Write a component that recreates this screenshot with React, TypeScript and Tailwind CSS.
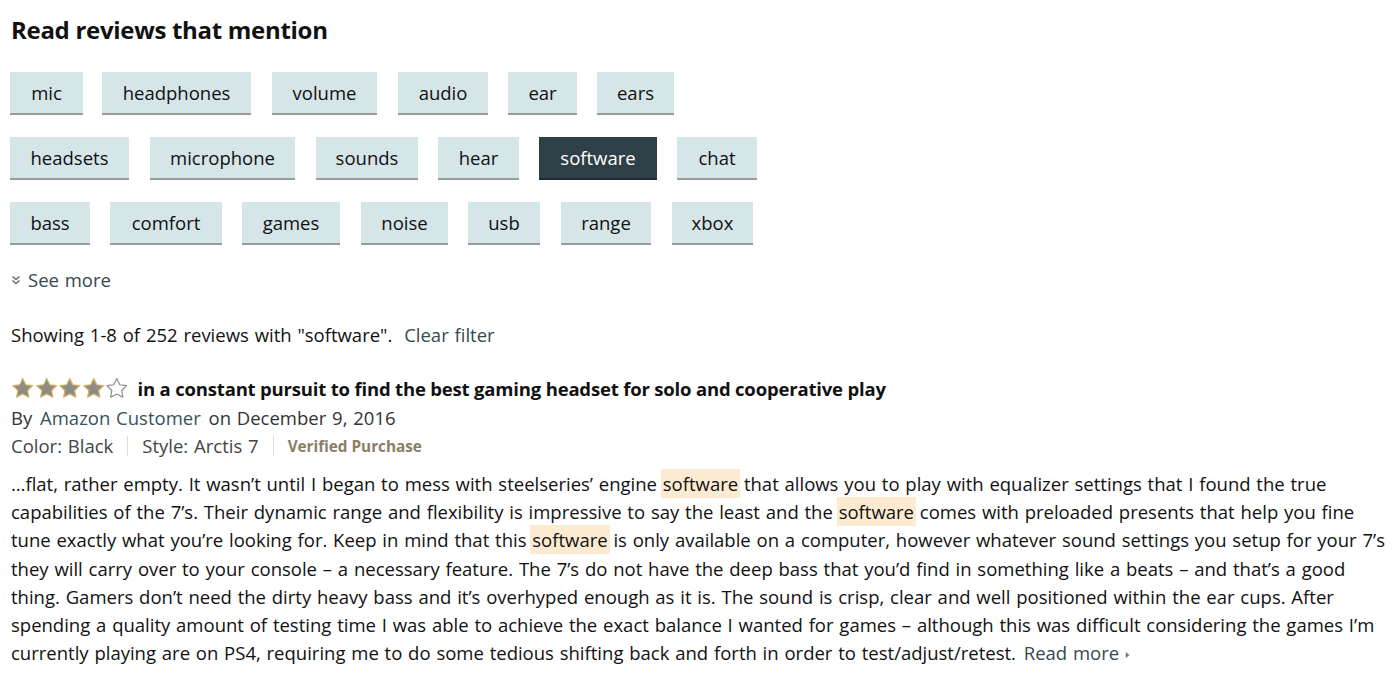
import React from "react";

type Tag = { label: string; w: string; ml: string; active?: boolean };

const rows: Tag[][] = [
  [
    { label: "mic", w: "w-[73px]", ml: "ml-0" },
    { label: "headphones", w: "w-[149px]", ml: "ml-[19px]" },
    { label: "volume", w: "w-[105px]", ml: "ml-[21px]" },
    { label: "audio", w: "w-[90px]", ml: "ml-[21px]" },
    { label: "ear", w: "w-[69px]", ml: "ml-[20px]" },
    { label: "ears", w: "w-[77px]", ml: "ml-[20px]" },
  ],
  [
    { label: "headsets", w: "w-[119px]", ml: "ml-0" },
    { label: "microphone", w: "w-[145px]", ml: "ml-[21px]" },
    { label: "sounds", w: "w-[102px]", ml: "ml-[21px]" },
    { label: "hear", w: "w-[81px]", ml: "ml-[20px]" },
    { label: "software", w: "w-[118px]", ml: "ml-[20px]", active: true },
    { label: "chat", w: "w-[80px]", ml: "ml-[20px]" },
  ],
  [
    { label: "bass", w: "w-[80px]", ml: "ml-0" },
    { label: "comfort", w: "w-[112px]", ml: "ml-[20px]" },
    { label: "games", w: "w-[98px]", ml: "ml-[20px]" },
    { label: "noise", w: "w-[87px]", ml: "ml-[21px]" },
    { label: "usb", w: "w-[72px]", ml: "ml-[20px]" },
    { label: "range", w: "w-[90px]", ml: "ml-[21px]" },
    { label: "xbox", w: "w-[81px]", ml: "ml-[21px]" },
  ],
];

const STAR =
  "M12 1.6l3.1 6.3 6.95.97-5.03 4.88 1.2 6.9L12 17.4 5.78 20.65l1.2-6.9L1.95 8.87l6.95-.97L12 1.6z";

function Star({ filled }: { filled: boolean }) {
  return (
    <svg viewBox="0 0 24 24" className="w-[23.5px] h-[23.5px] shrink-0">
      <path
        d={STAR}
        fill={filled ? "#8f8c84" : "#ffffff"}
        stroke={filled ? "#d8b46a" : "#8f8c84"}
        strokeWidth={1.2}
        strokeLinejoin="round"
      />
    </svg>
  );
}

function Hl({ children }: { children: React.ReactNode }) {
  return <span className="bg-[#fcebd1] px-[2px] -mx-[2px] py-[2px]">{children}</span>;
}

export default function App() {
  return (
    <div className="w-[1400px] h-[680px] overflow-hidden bg-white px-[11px] pt-[14px] font-['Open_Sans','Liberation_Sans',sans-serif] text-[#111] [word-spacing:1px]">
      <h2 className="text-[24px] font-bold leading-[32px] tracking-[-0.3px] [word-spacing:0px]">Read reviews that mention</h2>

      <div className="mt-[26px] -ml-px flex flex-col gap-[22px]">
        {rows.map((row, i) => (
          <div key={i} className="flex">
            {row.map((t) => (
              <div
                key={t.label}
                className={
                  t.active
                    ? `${t.w} ${t.ml} h-[43px] flex items-center justify-center bg-[#2e3f48] border-b-2 border-[#1e2a30] text-white text-[18.5px]`
                    : `${t.w} ${t.ml} h-[43px] flex items-center justify-center bg-[#d5e5e8] border-b-2 border-[#9a9c9c] text-[#111] text-[18.5px]`
                }
              >
                {t.label}
              </div>
            ))}
          </div>
        ))}
      </div>

      <div className="mt-[21px] flex items-center h-[28px] text-[18.5px] text-[#37474f]">
        <svg viewBox="0 0 10 10" className="w-[10px] h-[10px] mr-[7px]">
          <path d="M1.5 1.5L5 4.5L8.5 1.5M1.5 5.5L5 8.5L8.5 5.5" fill="none" stroke="#555" strokeWidth={1.1} />
        </svg>
        See more
      </div>

      <div className="mt-[27px] h-[28px] leading-[28px] text-[18.5px]">
        Showing 1-8 of 252 reviews with "software".{" "}
        <span className="text-[#37474f] ml-[6px]">Clear filter</span>
      </div>

      <div className="mt-[26px] flex items-center h-[28px]">
        <div className="flex">
          {[1, 2, 3, 4, 5].map((n) => (
            <Star key={n} filled={n <= 4} />
          ))}
        </div>
        <span className="ml-[9px] text-[18.5px] font-bold tracking-[-0.18px] [word-spacing:0px]">
          in a constant pursuit to find the best gaming headset for solo and cooperative play
        </span>
      </div>

      <div className="mt-px h-[28px] leading-[28px] text-[18.5px] text-[#333]">
        By <span className="text-[#37525c] ml-[2px] mr-[2px]">Amazon Customer</span> on December 9, 2016
      </div>

      <div className="h-[28px] flex items-center text-[18.5px] text-[#444]">
        <span>Color: Black</span>
        <span className="mx-[14px] w-px h-[20px] bg-[#ddd]" />
        <span>Style: Arctis 7</span>
        <span className="mx-[14px] w-px h-[20px] bg-[#ddd]" />
        <span className="text-[15.3px] font-bold text-[#8b7e66] [word-spacing:0px]">Verified Purchase</span>
      </div>

      <p className="mt-[10px] text-[18.5px] leading-[28.2px] whitespace-nowrap">
        …flat, rather empty. It wasn’t until I began to mess with steelseries’ engine <Hl>software</Hl> that allows you to play with equalizer settings that I found the true
        <br />
        capabilities of the 7’s. Their dynamic range and flexibility is impressive to say the least and the <Hl>software</Hl> comes with preloaded presents that help you fine
        <br />
        tune exactly what you’re looking for. Keep in mind that this <Hl>software</Hl> is only available on a computer, however whatever sound settings you setup for your 7’s
        <br />
        they will carry over to your console – a necessary feature. The 7’s do not have the deep bass that you’d find in something like a beats – and that’s a good
        <br />
        thing. Gamers don’t need the dirty heavy bass and it’s overhyped enough as it is. The sound is crisp, clear and well positioned within the ear cups. After
        <br />
        spending a quality amount of testing time I was able to achieve the exact balance I wanted for games – although this was difficult considering the games I’m
        <br />
        currently playing are on PS4, requiring me to do some tedious shifting back and forth in order to test/adjust/retest.{" "}
        <span className="text-[#37474f] ml-[2px]">Read more</span>
        <svg viewBox="0 0 8 10" className="inline-block w-[6px] h-[8px] ml-[6px] align-middle">
          <path d="M1 1L6 5L1 9Z" fill="#777" />
        </svg>
      </p>
    </div>
  );
}
